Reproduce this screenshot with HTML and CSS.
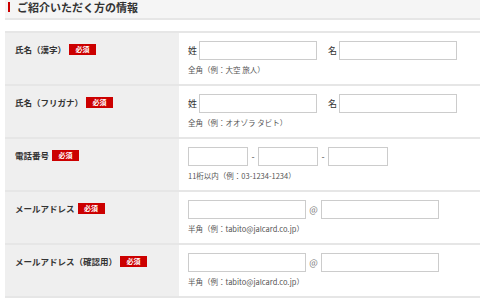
FILE: index.html
```html
<!DOCTYPE html>
<html lang="ja">
<head>
    <meta charset="UTF-8">
    <meta name="viewport" content="width=device-width, initial-scale=1.0">
    <title>ご紹介いただく方の情報</title>
    <link rel="stylesheet" href="styles.css">
</head>
<body>
    <div class="section-head">
        <h2>ご紹介いただく方の情報</h2>
    </div>

    <div class="form-table">
        <div class="form-row">
            <div class="form-label">氏名（漢字）<span class="required">必須</span></div>
            <div class="form-field">
                <div class="field-line">
                    <span class="prefix">姓</span><input type="text" class="name-input">
                    <span class="prefix second">名</span><input type="text" class="name-input">
                </div>
                <p class="hint">全角（例：大空 旅人）</p>
            </div>
        </div>

        <div class="form-row">
            <div class="form-label">氏名（フリガナ）<span class="required">必須</span></div>
            <div class="form-field">
                <div class="field-line">
                    <span class="prefix">姓</span><input type="text" class="name-input">
                    <span class="prefix second">名</span><input type="text" class="name-input">
                </div>
                <p class="hint">全角（例：オオゾラ タビト）</p>
            </div>
        </div>

        <div class="form-row">
            <div class="form-label">電話番号<span class="required">必須</span></div>
            <div class="form-field">
                <div class="field-line">
                    <input type="text" class="tel-input">
                    <span class="sep">-</span>
                    <input type="text" class="tel-input">
                    <span class="sep">-</span>
                    <input type="text" class="tel-input">
                </div>
                <p class="hint">11桁以内（例：03-1234-1234）</p>
            </div>
        </div>

        <div class="form-row">
            <div class="form-label">メールアドレス<span class="required">必須</span></div>
            <div class="form-field">
                <div class="field-line">
                    <input type="text" class="mail-input">
                    <span class="at">@</span>
                    <input type="text" class="mail-input">
                </div>
                <p class="hint">半角（例：tabito@jalcard.co.jp）</p>
            </div>
        </div>

        <div class="form-row">
            <div class="form-label">メールアドレス（確認用）<span class="required">必須</span></div>
            <div class="form-field">
                <div class="field-line">
                    <input type="text" class="mail-input">
                    <span class="at">@</span>
                    <input type="text" class="mail-input">
                </div>
                <p class="hint">半角（例：tabito@jalcard.co.jp）</p>
            </div>
        </div>
    </div>
</body>
</html>
```

FILE: styles.css
```css
body {
    font-family: "Noto Sans CJK JP", "Noto Sans", sans-serif;
    background-color: #ffffff;
    color: #333333;
    margin: 0;
    padding: 0 0 0 5px;
    overflow: hidden;
}

.section-head {
    background-color: #f5f5f5;
    border-bottom: 2px solid #e6e6e6;
    height: 16px;
    padding: 2px 0 0 3px;
}

.section-head h2 {
    margin: 0;
    font-size: 11px;
    line-height: 10px;
    font-weight: bold;
    border-left: 2px solid #cc0000;
    padding-left: 7px;
}

.form-table {
    margin-top: 11px;
    border-top: 2px solid #e6e6e6;
}

.form-row {
    display: grid;
    grid-template-columns: 174px 1fr;
    height: 51px;
    border-bottom: 2px solid #e6e6e6;
}

.form-label {
    background-color: #efefef;
    padding: 11px 0 0 10px;
    font-size: 8.5px;
    font-weight: bold;
    line-height: 11px;
    display: flex;
    align-items: flex-start;
}

.required {
    display: inline-block;
    background-color: #cc0000;
    color: #ffffff;
    font-size: 7px;
    line-height: 11px;
    width: 27px;
    text-align: center;
    margin-left: 3px;
}

.form-field {
    padding: 8px 0 0 9px;
}

.field-line {
    display: flex;
    align-items: center;
    height: 19px;
}

.prefix {
    font-size: 9px;
    margin-right: 2px;
}

.prefix.second {
    margin-left: 11px;
}

input {
    box-sizing: border-box;
    height: 19px;
    border: 1px solid #cccccc;
    margin: 0;
    padding: 0 3px;
    background: #ffffff;
}

.name-input,
.mail-input {
    width: 118px;
}

.tel-input {
    width: 60px;
}

.sep {
    font-size: 9px;
    width: 10px;
    text-align: center;
    color: #555555;
}

.at {
    font-size: 9px;
    width: 15px;
    text-align: center;
    color: #777777;
}

.hint {
    margin: 5px 0 0;
    font-size: 7.5px;
    line-height: 10px;
    color: #555555;
}
```
